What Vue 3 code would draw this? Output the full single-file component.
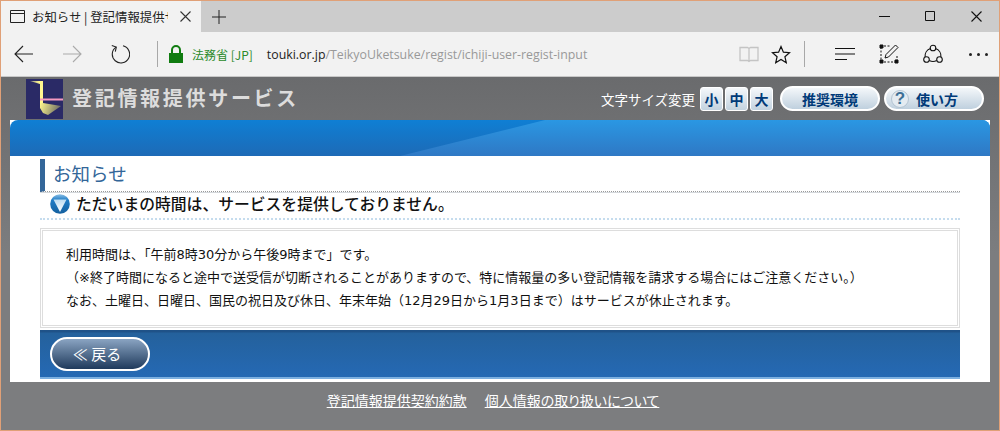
<script setup>
const notes = [
  '利用時間は、「午前8時30分から午後9時まで」です。',
  '（※終了時間になると途中で送受信が切断されることがありますので、特に情報量の多い登記情報を請求する場合にはご注意ください。）',
  'なお、土曜日、日曜日、国民の祝日及び休日、年末年始（12月29日から1月3日まで）はサービスが休止されます。',
]
</script>

<template>
  <div class="window">
    <div class="tabstrip">
      <div class="tab">
        <svg class="tab-icon" width="15" height="13" viewBox="0 0 15 13" fill="none" stroke="#222">
          <path d="M.5.5h14v12H.5zM.5 3.500h14" />
        </svg>
        <span class="tab-title">お知らせ | 登記情報提供サービス</span>
        <svg width="11" height="11" viewBox="0 0 11 11" stroke="#333" stroke-width="1.1">
          <path d="M.5.5l10 10M10.500.5l-10 10" />
        </svg>
      </div>
      <svg class="new-tab" width="14" height="14" viewBox="0 0 14 14" stroke="#222">
        <path d="M7 0v14M0 7h14" />
      </svg>
      <div class="win-controls">
        <svg width="11" height="11" viewBox="0 0 11 11" stroke="#111"><path d="M0 5.500h11" /></svg>
        <svg width="11" height="11" viewBox="0 0 11 11" fill="none" stroke="#111"><path d="M.5.5h9v9h-9z" /></svg>
        <svg width="11" height="11" viewBox="0 0 11 11" stroke="#111" stroke-width="1.1"><path d="M.5.5l10 10M10.500.5l-10 10" /></svg>
      </div>
    </div>

    <div class="toolbar">
      <svg class="nav-back" width="20" height="18" viewBox="0 0 20 18" fill="none" stroke="#222" stroke-width="1.1">
        <path d="M19 9H1M9 1L1 9l8 8" />
      </svg>
      <svg class="nav-fwd" width="20" height="18" viewBox="0 0 20 18" fill="none" stroke="#aaa" stroke-width="1.1">
        <path d="M1 9h18M11 1l8 8-8 8" />
      </svg>
      <svg class="nav-reload" width="20" height="20" viewBox="0 0 20 20" fill="none" stroke="#222" stroke-width="1.1">
        <path d="M6 3.100A8.700 8.700 0 1 0 13 1.800" />
        <path d="M1.800 1.500L6.300 3l-1 4.600" />
      </svg>
      <i class="tool-sep"></i>
      <svg class="lock" width="14" height="18" viewBox="0 0 14 18">
        <path d="M3 8V5a4 4 0 0 1 8 0v3" fill="none" stroke="#107c10" stroke-width="2" />
        <rect y="8" width="14" height="10" fill="#107c10" />
      </svg>
      <span class="site-id">法務省 [JP]</span>
      <span class="url"><b>touki.or.jp</b>/TeikyoUketsuke/regist/ichiji-user-regist-input</span>
      <svg class="reading" width="20" height="17" viewBox="0 0 20 17" fill="none" stroke="#c4c4c4" stroke-width="1.300">
        <path d="M1 1.500h7.500l1.500 1 1.500-1H19v13h-7.500l-1.500 1-1.500-1H1zM10 2.500v12" />
      </svg>
      <svg class="star" width="20" height="19" viewBox="0 0 20 19" fill="none" stroke="#111" stroke-width="1.200">
        <path d="M10 1.500l2.400 5.700 6.100.5-4.600 4 1.400 6L10 14.500l-5.300 3.200 1.400-6-4.600-4 6.100-.5z" />
      </svg>
      <i class="tool-sep right"></i>
      <svg class="hub" width="20" height="14" viewBox="0 0 20 14" stroke="#111" stroke-width="1.100">
        <path d="M0 1.500h20M0 7h20M0 12.500h12" />
      </svg>
      <svg class="note" width="20" height="20" viewBox="0 0 20 20" fill="none" stroke="#111">
        <path d="M2 3v14M5 2h6M18 12v5M5 18h11" stroke-dasharray="2 1.500" />
        <path d="M6 14l1-3.500L16.500 1 19 3.500 9.500 13z" />
        <path d="M1 1h3v3H1zM1 16h3v3H1zM16 16h3v3h-3z" fill="#111" />
      </svg>
      <svg class="share" width="20" height="20" viewBox="0 0 20 20" fill="none" stroke="#111" stroke-width="1.100">
        <circle cx="10" cy="4" r="2.800" />
        <circle cx="3.500" cy="15.500" r="2.800" />
        <circle cx="16.500" cy="15.500" r="2.800" />
        <path d="M7.500 4.500A8 8 0 0 0 2.100 13M12.500 4.500A8 8 0 0 1 17.900 13M6.300 16.500a8 8 0 0 0 7.400 0" />
      </svg>
      <div class="more"><i></i><i></i><i></i></div>
    </div>

    <div class="page">
      <header class="site-head">
        <svg class="logo" width="37" height="40" viewBox="0 0 37 40">
          <defs>
            <linearGradient id="beam" x1="0" y1="0" x2="1" y2="0.200">
              <stop offset="0" stop-color="#fff98c" />
              <stop offset="1" stop-color="#6f6e66" />
            </linearGradient>
            <linearGradient id="arm" x1="0" y1="0" x2="1" y2="0">
              <stop offset="0" stop-color="#8f8e85" />
              <stop offset="0.700" stop-color="#fff78f" />
            </linearGradient>
          </defs>
          <rect width="37" height="40" fill="#2a2a66" />
          <path d="M4 2l13 0v3h-3z" fill="url(#arm)" />
          <path d="M14 3h3v22h-3z" fill="#fff78f" />
          <path d="M14 24l3 0 18 3-13 9-5-2-3-5z" fill="url(#beam)" />
          <rect x="14" y="19.500" width="23" height="2" fill="#f59ac0" />
        </svg>
        <span class="site-name">登記情報提供サービス</span>
        <div class="head-tools">
          <span class="size-label">文字サイズ変更</span>
          <button class="size-btn">小</button>
          <button class="size-btn">中</button>
          <button class="size-btn">大</button>
          <button class="pill-btn env">推奨環境</button>
          <button class="pill-btn help"><span class="qmark">?</span>使い方</button>
        </div>
      </header>

      <main class="panel">
        <div class="band"><i class="band-sheen"></i></div>
        <section class="content">
          <h1 class="title">お知らせ</h1>
          <h2 class="subtitle">
            <svg width="20" height="20" viewBox="0 0 20 20">
              <defs>
                <linearGradient id="ball" x1="0" y1="0" x2="0" y2="1">
                  <stop offset="0" stop-color="#8cc0e6" />
                  <stop offset="0.300" stop-color="#1f7cc6" />
                  <stop offset="1" stop-color="#14609f" />
                </linearGradient>
                <linearGradient id="tri" x1="0" y1="0" x2="0" y2="1">
                  <stop offset="0" stop-color="#bcdcf2" />
                  <stop offset="1" stop-color="#fff" />
                </linearGradient>
              </defs>
              <circle cx="10" cy="10" r="9.800" fill="url(#ball)" />
              <path d="M3.500 5.500h13L10 18z" fill="url(#tri)" />
            </svg>
            ただいまの時間は、サービスを提供しておりません。
          </h2>
          <div class="notice">
            <p v-for="line in notes" :key="line">{{ line }}</p>
          </div>
          <div class="action-bar">
            <button class="back-btn">≪ 戻る</button>
          </div>
        </section>
      </main>

      <footer class="site-foot">
        <a href="#">登記情報提供契約約款</a>
        <a class="tight" href="#">個人情報の取り扱いについて</a>
      </footer>
    </div>
  </div>
</template>

<style>
html, body {
  margin: 0;
  background: #7c7d7f;
}
</style>

<style scoped>
.window {
  width: 1000px;
  height: 431px;
  box-sizing: border-box;
  border: 1px solid #e0a077;
  display: flex;
  flex-direction: column;
  overflow: hidden;
  font-family: "Noto Sans CJK JP", "Liberation Sans", sans-serif;
}

/* browser chrome */
.tabstrip {
  height: 31px;
  background: #cccccc;
  display: flex;
  align-items: center;
  flex: none;
}
.tab {
  width: 200px;
  height: 31px;
  background: #f2f2f2;
  display: flex;
  align-items: center;
  box-sizing: border-box;
  padding-left: 9px;
  flex: none;
}
.tab-icon {
  margin-right: 7px;
  flex: none;
}
.tab-title {
  width: 136px;
  font-size: 12.400px;
  color: #222;
  white-space: nowrap;
  overflow: hidden;
  margin-right: 12px;
  flex: none;
}
.new-tab {
  margin-left: 11px;
}
.win-controls {
  margin-left: auto;
  display: flex;
  gap: 35px;
  padding-right: 17px;
}
.toolbar {
  height: 44px;
  background: #f2f2f2;
  border-bottom: 1px solid #c8c8c8;
  display: flex;
  align-items: center;
  flex: none;
  position: relative;
}
.nav-back { margin-left: 13px; }
.nav-fwd { margin-left: 28px; }
.nav-reload { margin-left: 28px; }
.tool-sep {
  width: 1px;
  height: 26px;
  background: #a8a8a8;
  margin-left: 27px;
}
.tool-sep.right { margin-left: 13px; }
.lock { margin-left: 11px; }
.site-id {
  margin-left: 9px;
  font-size: 12px;
  color: #2a8a2a;
  white-space: nowrap;
}
.url {
  margin-left: 14px;
  font-family: "Open Sans", "Liberation Sans", sans-serif;
  font-size: 12.350px;
  color: #999;
  white-space: nowrap;
  width: 472px;
}
.url b {
  font-weight: 400;
  color: #222;
}
.reading { margin-left: 0; }
.star { margin-left: 12px; }
.hub { margin-left: 30px; }
.note { margin-left: 24px; }
.share { margin-left: 24px; }
.more {
  margin-left: 26px;
  display: flex;
  gap: 5px;
}
.more i {
  width: 3px;
  height: 3px;
  border-radius: 50%;
  background: #222;
}

/* page */
.page {
  flex: 1;
  min-height: 0;
  background: linear-gradient(#6a6b6d, #7c7d7f 50%);
  display: flex;
  flex-direction: column;
}
.site-head {
  height: 43px;
  display: flex;
  align-items: center;
  flex: none;
  padding-left: 25px;
}
.logo { flex: none; }
.site-name {
  margin-left: 9px;
  padding-bottom: 2px;
  font-size: 20px;
  font-weight: 700;
  letter-spacing: 2.700px;
  color: #dcdcdc;
  white-space: nowrap;
}
.head-tools {
  margin-left: auto;
  display: flex;
  align-items: center;
  padding-right: 15px;
}
.size-label {
  color: #fff;
  font-size: 13.500px;
  margin-right: 5px;
  white-space: nowrap;
}
button {
  font-family: inherit;
  padding: 0;
  cursor: pointer;
}
.size-btn {
  width: 23px;
  height: 24px;
  margin-right: 2px;
  border: 1px solid #fff;
  border-radius: 3px;
  background: linear-gradient(#f4f7fa, #c3d3e0);
  color: #003a78;
  font-size: 14px;
  font-weight: 700;
  line-height: 20px;
}
.pill-btn {
  height: 25px;
  width: 100px;
  border: 2px solid #fff;
  border-radius: 13px;
  background: linear-gradient(#f4f7fa, #bfd0de);
  color: #003a78;
  font-size: 14px;
  font-weight: 700;
  line-height: 20px;
  display: flex;
  align-items: center;
  justify-content: center;
  box-sizing: border-box;
}
.env { margin-left: 5px; }
.help {
  margin-left: 4px;
  gap: 7px;
  justify-content: flex-start;
  padding-left: 5px;
}
.qmark {
  width: 18px;
  height: 18px;
  border-radius: 50%;
  background: #e4ebf1;
  border: 1px solid #b3c4d2;
  box-sizing: border-box;
  color: #3d6f96;
  font: 700 17px/16px "Liberation Sans", sans-serif;
}
.panel {
  margin: 0 9px;
  background: #fff;
  flex: none;
  display: flex;
  flex-direction: column;
}
.band {
  height: 36px;
  border-radius: 8px 8px 0 0;
  background: linear-gradient(#0f7fd4, #1d6ab6);
  position: relative;
  overflow: hidden;
}
.band-sheen {
  position: absolute;
  inset: 0;
  background: linear-gradient(#2a97e3, #2f78c4);
  clip-path: polygon(39.800% 100%, 54.600% 0, 100% 0, 100% 100%);
}
.content {
  padding: 3px 30px 3px;
}
.title {
  margin: 0;
  height: 33px;
  box-sizing: border-box;
  border-left: 5px solid #336699;
  border-bottom: 1px dotted #999;
  padding-left: 8px;
  font-size: 18.500px;
  font-weight: 400;
  line-height: 29px;
  color: #336699;
}
.subtitle {
  margin: 0;
  height: 28px;
  box-sizing: border-box;
  display: flex;
  align-items: center;
  gap: 6px;
  padding: 0 0 4px 10px;
  border-top: 1px solid #d4d8dc;
  border-bottom: 2px dotted #c5dcee;
  font-size: 15.800px;
  font-weight: 500;
  color: #111;
  white-space: nowrap;
}
.notice {
  margin-top: 8px;
  height: 100px;
  box-sizing: border-box;
  border: 1px solid #ddd;
  outline: 1px solid #ddd;
  outline-offset: -3px;
  padding: 14px 25px 0;
  color: #111;
  font-family: "DejaVu Sans", "Noto Sans CJK JP", sans-serif;
  font-size: 13px;
}
.notice p {
  margin: 0;
  line-height: 23px;
  white-space: nowrap;
}
.action-bar {
  margin-top: 2px;
  height: 49px;
  box-sizing: border-box;
  background: linear-gradient(#1f5288 2px, #24619c 3px, #2569b4);
  border-bottom: 2px solid #7db0e0;
  padding: 7px 0 0 10px;
}
.back-btn {
  display: block;
  width: 100px;
  height: 34px;
  border: 2px solid #fff;
  border-radius: 17px;
  background: linear-gradient(#8aa4c2, #1f3a5c);
  color: #fff;
  font-size: 15px;
  line-height: 28px;
  padding-right: 6px;
}
.site-foot {
  display: flex;
  justify-content: center;
  gap: 18px;
  padding-top: 9px;
  padding-right: 14px;
}
.site-foot a {
  color: #fff;
  font-size: 14px;
  line-height: 18px;
  text-decoration: underline;
}
.site-foot a.tight {
  font-feature-settings: "palt";
}
</style>
